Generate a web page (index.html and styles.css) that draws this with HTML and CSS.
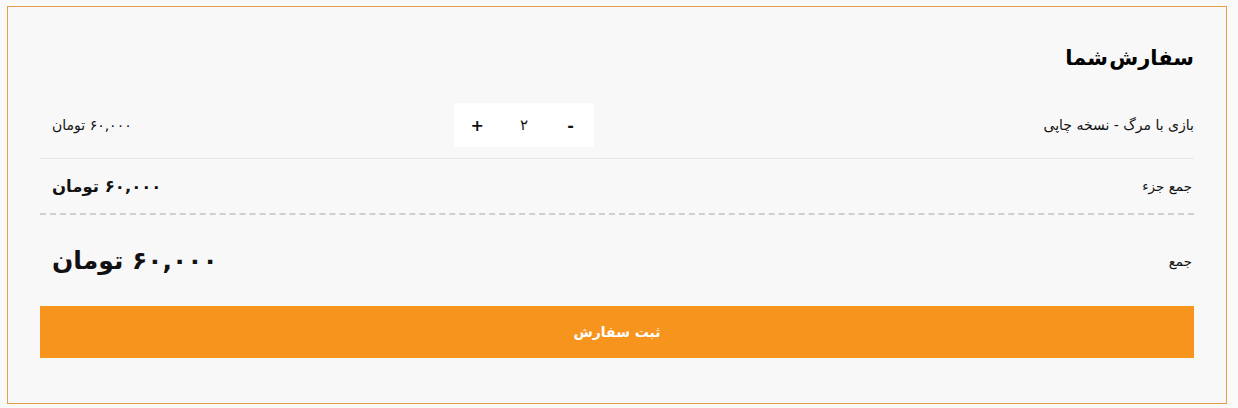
FILE: index.html
```html
<!DOCTYPE html>
<html lang="fa" dir="rtl">
<head>
<meta charset="utf-8">
<link rel="stylesheet" href="styles.css">
</head>
<body>
<div class="order">
  <h2 class="title">سفارش شما</h2>
  <div class="row item">
    <div class="name">بازی با مرگ - نسخه چاپی</div>
    <div class="qty">
      <span class="qbtn">-</span>
      <span class="qnum">۲</span>
      <span class="qbtn">+</span>
    </div>
    <div class="price">۶۰,۰۰۰ تومان</div>
  </div>
  <div class="row subtotal">
    <div class="label">جمع جزء</div>
    <div class="price bold">۶۰,۰۰۰ تومان</div>
  </div>
  <div class="row total">
    <div class="label">جمع</div>
    <div class="price big">۶۰,۰۰۰ تومان</div>
  </div>
  <button class="submit">ثبت سفارش</button>
</div>
</body>
</html>
```
FILE: styles.css
```css
* { box-sizing: border-box; }
html, body { margin: 0; padding: 0; background: #f9f9f9; }
body {
  font-family: "DejaVu Sans", "Noto Sans", sans-serif;
  color: #111;
  width: 1238px;
  height: 408px;
  padding: 6px 11px 0 7px;
}
.order {
  width: 1220px;
  height: 398px;
  border: 1px solid #e2a04a;
  background: #f8f8f8;
  padding: 0 32px 0 32px;
  display: flex;
  flex-direction: column;
}
.title {
  margin: 0;
  height: 85px;
  padding-top: 37px;
  font-size: 21px;
  font-weight: bold;
  line-height: 28px;
  word-spacing: -6px;
  color: #000;
}
.row {
  display: flex;
  align-items: center;
}
.item {
  height: 67px;
  border-bottom: 1px solid #e6e6e6;
}
.item .name {
  width: 600px;
  font-size: 14px;
}
.qty {
  width: 140px;
  height: 44px;
  background: #fff;
  display: flex;
  align-items: center;
}
.qty span {
  flex: 1;
  text-align: center;
  font-size: 15px;
}
.qty .qbtn { font-weight: bold; font-size: 16px; }
.item .price {
  margin-right: auto;
  padding-left: 12px;
  font-size: 14px;
}
.subtotal {
  height: 56px;
  border-bottom: 2px dashed #cfcfcf;
}
.label {
  font-size: 13.5px;
  padding-right: 2px;
}
.price {
  margin-right: auto;
  padding-left: 12px;
}
.bold { font-weight: bold; font-size: 16.5px; }
.total { height: 91px; }
.big { font-weight: bold; font-size: 25px; }
.submit {
  height: 52px;
  width: 100%;
  border: 0;
  background: #f7941d;
  color: #fff;
  font-family: inherit;
  font-weight: bold;
  font-size: 14px;
  letter-spacing: 1px;
  padding: 0;
}
```
